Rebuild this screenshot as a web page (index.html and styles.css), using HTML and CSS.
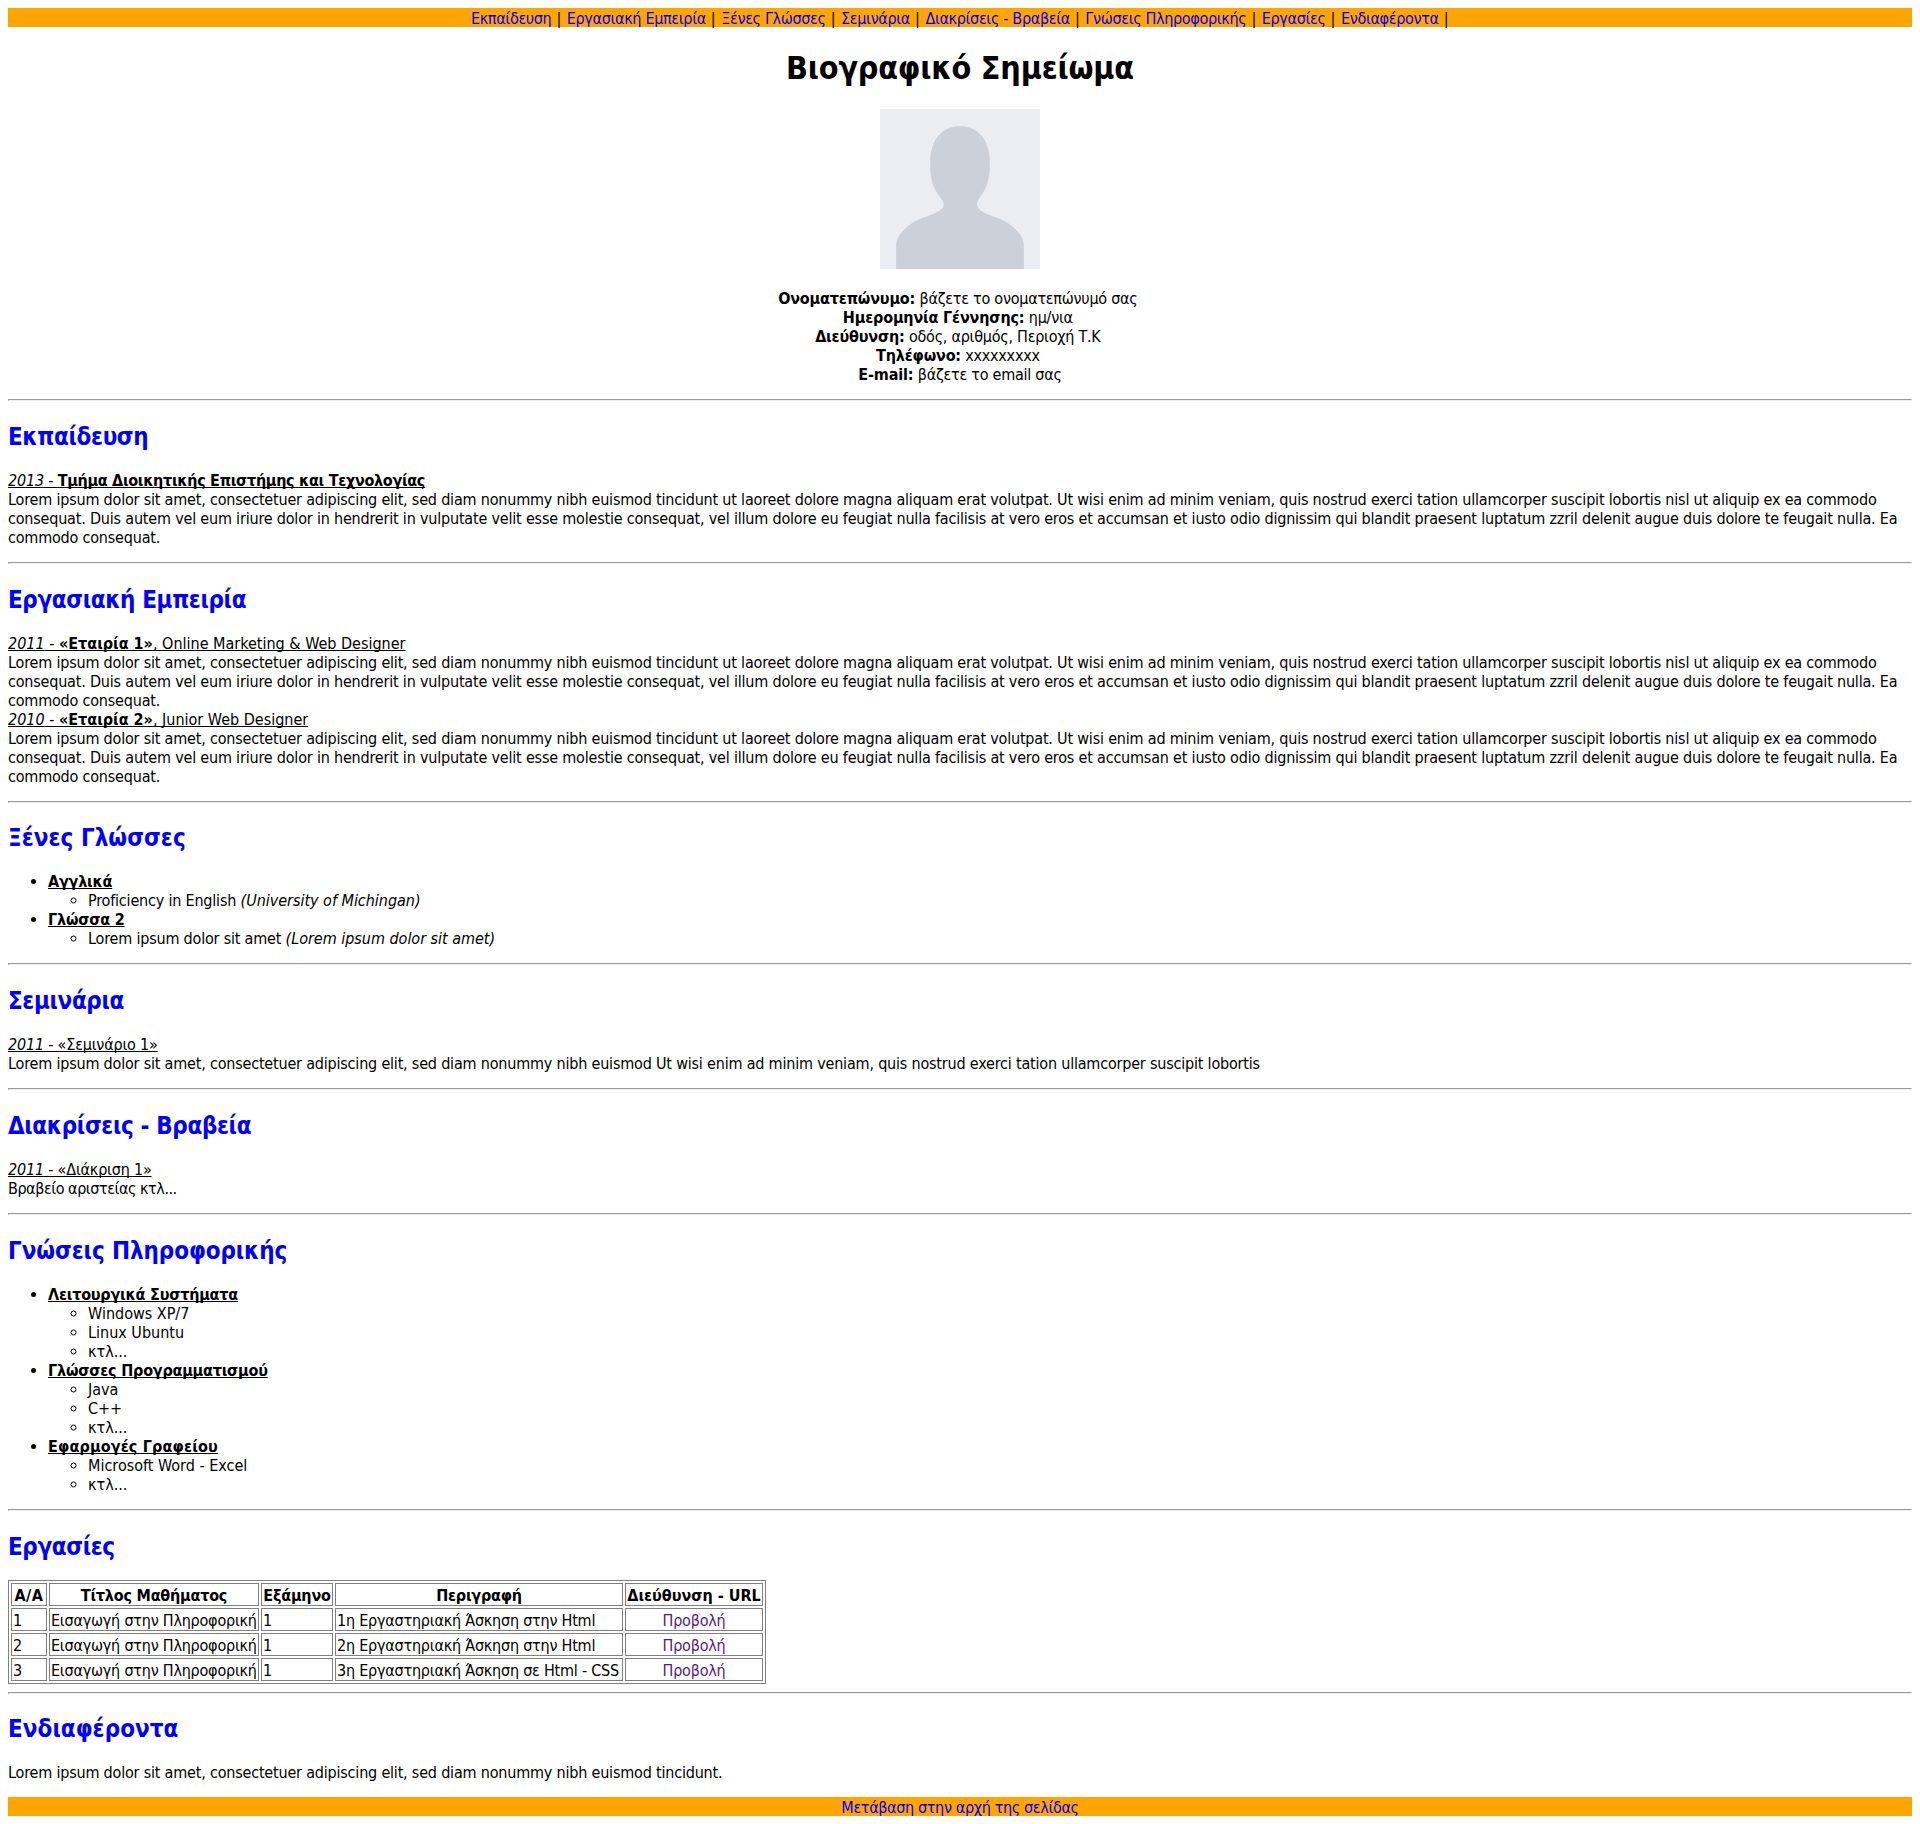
FILE: index.html
```html
<!DOCTYPE html>
<html lang="el">
<head>
<meta charset="utf-8">
<title>Βιογραφικό Σημείωμα</title>
<link rel="stylesheet" href="styles.css">
</head>
<body>
<nav class="bar menu" id="top"><a href="#education">Εκπαίδευση</a> | <a href="#work">Εργασιακή Εμπειρία</a> | <a href="#languages">Ξένες Γλώσσες</a> | <a href="#seminars">Σεμινάρια</a> | <a href="#awards">Διακρίσεις - Βραβεία</a> | <a href="#computing">Γνώσεις Πληροφορικής</a> | <a href="#projects">Εργασίες</a> | <a href="#interests">Ενδιαφέροντα</a> |</nav>

<header class="intro">
<h1>Βιογραφικό Σημείωμα</h1>
<svg class="avatar" viewBox="0 0 160 160" role="img" aria-label="Φωτογραφία">
<rect width="160" height="160" fill="#ebedf2"/>
<path d="M16.500 160V137C16.500 124 31 113 46 108C57 104 64 101 64 95C64 92 60 88 57 83C52 75 50.500 65 50.500 54C50.500 31 62 17.500 80 17.500S109.500 31 109.500 54C109.500 65 108 75 103 83C100 88 96.500 92 96.500 95C96.500 101 103 104 114 108C129 113 143.500 124 143.500 137V160Z" fill="#cbd0d9" stroke="#c6cdd6" stroke-width="0.600"/>
</svg>
<p class="contact"><b>Ονοματεπώνυμο:</b> βάζετε το ονοματεπώνυμό σας&nbsp;<br>
<b>Ημερομηνία Γέννησης:</b> ημ/νια&nbsp;<br>
<b>Διεύθυνση:</b> οδός, αριθμός, Περιοχή Τ.Κ&nbsp;<br>
<b>Τηλέφωνο:</b> xxxxxxxxx&nbsp;<br>
<b>E-mail:</b> βάζετε το email σας</p>
</header>
<hr>

<h2 id="education" class="snug">Εκπαίδευση</h2>
<p><u class="degree"><i>2013</i> - <b>Τμήμα Διοικητικής Επιστήμης και Τεχνολογίας</b></u><br>
Lorem ipsum dolor sit amet, consectetuer adipiscing elit, sed diam nonummy nibh euismod tincidunt ut laoreet dolore magna aliquam erat volutpat. Ut wisi enim ad minim veniam, quis nostrud exerci tation ullamcorper suscipit lobortis nisl ut aliquip ex ea commodo consequat. Duis autem vel eum iriure dolor in hendrerit in vulputate velit esse molestie consequat, vel illum dolore eu feugiat nulla facilisis at vero eros et accumsan et iusto odio dignissim qui blandit praesent luptatum zzril delenit augue duis dolore te feugait nulla. Ea commodo consequat.</p>
<hr>

<h2 id="work" class="snug">Εργασιακή Εμπειρία</h2>
<p><u class="job"><i>2011</i> - <b>«Εταιρία 1»</b>, Online Marketing &amp; Web Designer</u><br>
Lorem ipsum dolor sit amet, consectetuer adipiscing elit, sed diam nonummy nibh euismod tincidunt ut laoreet dolore magna aliquam erat volutpat. Ut wisi enim ad minim veniam, quis nostrud exerci tation ullamcorper suscipit lobortis nisl ut aliquip ex ea commodo consequat. Duis autem vel eum iriure dolor in hendrerit in vulputate velit esse molestie consequat, vel illum dolore eu feugiat nulla facilisis at vero eros et accumsan et iusto odio dignissim qui blandit praesent luptatum zzril delenit augue duis dolore te feugait nulla. Ea commodo consequat.<br>
<u class="job"><i>2010</i> - <b>«Εταιρία 2»</b>, Junior Web Designer</u><br>
Lorem ipsum dolor sit amet, consectetuer adipiscing elit, sed diam nonummy nibh euismod tincidunt ut laoreet dolore magna aliquam erat volutpat. Ut wisi enim ad minim veniam, quis nostrud exerci tation ullamcorper suscipit lobortis nisl ut aliquip ex ea commodo consequat. Duis autem vel eum iriure dolor in hendrerit in vulputate velit esse molestie consequat, vel illum dolore eu feugiat nulla facilisis at vero eros et accumsan et iusto odio dignissim qui blandit praesent luptatum zzril delenit augue duis dolore te feugait nulla. Ea commodo consequat.</p>
<hr>

<h2 id="languages" class="loose">Ξένες Γλώσσες</h2>
<ul class="skills">
<li><b><u>Αγγλικά</u></b>
<ul><li>Proficiency in English <i>(University of Michingan)</i></li></ul></li>
<li><b><u>Γλώσσα 2</u></b>
<ul><li>Lorem ipsum dolor sit amet <i>(Lorem ipsum dolor sit amet)</i></li></ul></li>
</ul>
<hr>

<h2 id="seminars" class="snug">Σεμινάρια</h2>
<p><u><i>2011</i> - «Σεμινάριο 1»</u><br>
Lorem ipsum dolor sit amet, consectetuer adipiscing elit, sed diam nonummy nibh euismod Ut wisi enim ad minim veniam, quis nostrud exerci tation ullamcorper suscipit lobortis</p>
<hr>

<h2 id="awards" class="snug">Διακρίσεις - Βραβεία</h2>
<p><u><i>2011</i> - «Διάκριση 1»</u><br>
<span class="award">Βραβείο αριστείας κτλ...</span></p>
<hr>

<h2 id="computing">Γνώσεις Πληροφορικής</h2>
<ul class="skills tools">
<li><b><u>Λειτουργικά Συστήματα</u></b>
<ul><li>Windows XP/7</li><li>Linux Ubuntu</li><li>κτλ...</li></ul></li>
<li><b><u>Γλώσσες Προγραμματισμού</u></b>
<ul><li>Java</li><li>C++</li><li>κτλ...</li></ul></li>
<li><b class="office"><u>Εφαρμογές Γραφείου</u></b>
<ul><li>Microsoft Word - Excel</li><li>κτλ...</li></ul></li>
</ul>
<hr>

<h2 id="projects" class="snug">Εργασίες</h2>
<table class="projects">
<colgroup><col class="c-num"><col class="c-title"><col class="c-term"><col class="c-desc"><col class="c-url"></colgroup>
<tr><th>Α/Α</th><th>Τίτλος Μαθήματος</th><th>Εξάμηνο</th><th>Περιγραφή</th><th>Διεύθυνση - URL</th></tr>
<tr><td>1</td><td>Εισαγωγή στην Πληροφορική</td><td>1</td><td>1η Εργαστηριακή Άσκηση στην Html</td><td class="view"><a href="#projects">Προβολή</a></td></tr>
<tr><td>2</td><td>Εισαγωγή στην Πληροφορική</td><td>1</td><td>2η Εργαστηριακή Άσκηση στην Html</td><td class="view"><a href="#projects">Προβολή</a></td></tr>
<tr><td>3</td><td>Εισαγωγή στην Πληροφορική</td><td>1</td><td>3η Εργαστηριακή Άσκηση σε Html - CSS</td><td class="view"><a href="#projects">Προβολή</a></td></tr>
</table>
<hr>

<h2 id="interests" class="loose">Ενδιαφέροντα</h2>
<p>Lorem ipsum dolor sit amet, consectetuer adipiscing elit, sed diam nonummy nibh euismod tincidunt.</p>
<footer class="bar foot"><a href="#top">Μετάβαση στην αρχή της σελίδας</a></footer>
</body>
</html>
```
FILE: styles.css
```css
body {
  margin: 8px;
  background: #fff;
  color: #000;
  font: 16px/19px "DejaVu Sans Condensed", "DejaVu Sans", sans-serif;
  letter-spacing: -0.193px;
}
a { text-decoration: none; color: #00f; }
b, th { letter-spacing: -0.2px; }
u {
  text-decoration-thickness: 1px;
  text-underline-offset: 1px;
  text-decoration-skip-ink: none;
}
p { margin: 16px 0 15px; padding-top: 1px; }
hr { margin: 8px 0; }

.bar {
  height: 19px;
  background: orange;
  text-align: center;
  line-height: 21px;
}
.menu { letter-spacing: 0.46px; }
.menu a { letter-spacing: -0.33px; }
.foot { letter-spacing: -0.35px; }

.intro { text-align: center; }
h1 {
  margin: 21.44px 0 20.44px;
  padding-top: 1px;
  font-size: 32px;
  line-height: 39px;
}
.avatar { display: block; width: 160px; height: 160px; margin: 0 auto 19px; }
.contact { letter-spacing: -0.25px; }
.contact b { letter-spacing: -0.16px; }

h2 {
  margin: 19.92px 0 17.92px;
  padding-top: 2px;
  color: #00f;
  font-size: 24px;
  line-height: 29px;
  letter-spacing: -0.1px;
}
.snug { letter-spacing: -0.38px; }
.loose { letter-spacing: 0.03px; }

.job, .job b { letter-spacing: 0; }
.degree b { letter-spacing: -0.29px; }
.award { letter-spacing: -0.45px; }

.skills { margin: 16px 0 15px; padding: 1px 0 0 40px; }
.skills ul { margin: 0; padding-left: 40px; }
.skills i { letter-spacing: -0.02px; }
.tools ul { letter-spacing: 0; }
.office { letter-spacing: 0.16px; }

.projects {
  width: 758px;
  table-layout: fixed;
  border: 1px solid gray;
  border-spacing: 2px;
}
.projects th, .projects td {
  padding: 2px 1px 0;
  border: 1px solid gray;
  white-space: nowrap;
}
.c-num { width: 36px; }
.c-title { width: 210px; }
.c-term { width: 72px; }
.c-desc { width: 288px; }
.c-url { width: 138px; }
.projects td { letter-spacing: -0.22px; }
.projects th:first-child { letter-spacing: 0.5px; }
.projects th:last-child { letter-spacing: 0; }
.view { text-align: center; }
.view a { color: #551a8b; }
```
